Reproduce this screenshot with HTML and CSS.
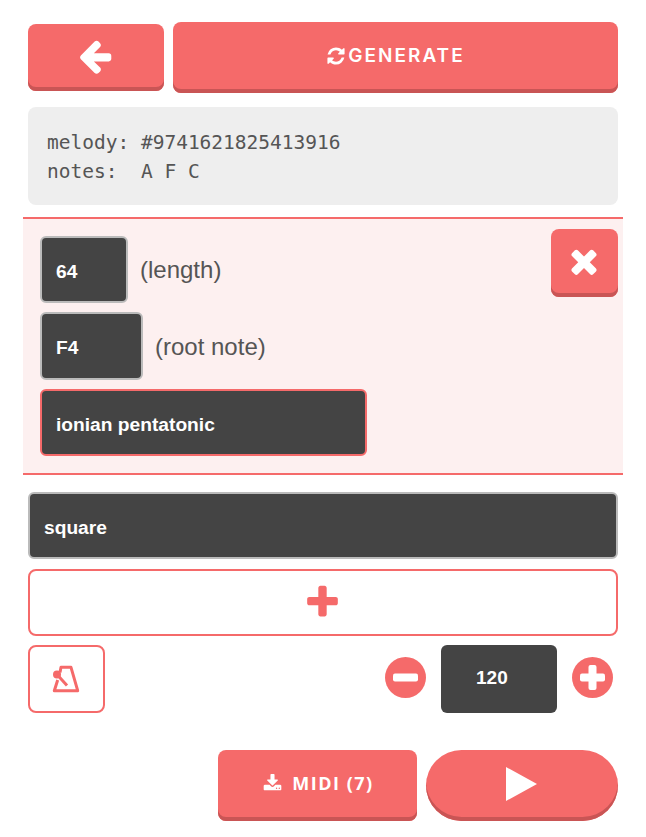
FILE: index.html
```html
<!DOCTYPE html>
<html lang="en">
<head>
    <meta charset="UTF-8">
    <meta name="viewport" content="width=device-width, initial-scale=1.0">
    <title>Melody Generator</title>
    <link rel="stylesheet" href="styles.css">
</head>
<body>
    <div class="container">
        <div class="top-row">
            <button type="button" class="btn btn-back">
                <svg class="icon-back" viewBox="0 0 1792 1792"><path d="M1664 896v128q0 53-32.5 89.5t-84.5 36.5h-704l293 294q38 36 38 90t-38 90l-75 76q-38 38-90 38-53 0-91-38l-651-652q-37-37-37-90 0-52 37-91l651-650q39-38 91-38 52 0 90 38l75 74q38 38 38 91t-38 91l-293 293h704q52 0 84.5 36.5t32.5 89.5z"/></svg>
            </button>
            <button type="button" class="btn btn-generate">
                <svg class="icon-refresh" viewBox="0 0 1792 1792"><path d="M1639 1056q0 5-1 7-64 268-268 434.5t-478 166.5q-146 0-282.5-55t-243.5-157l-129 129q-19 19-45 19t-45-19-19-45v-448q0-26 19-45t45-19h448q26 0 45 19t19 45-19 45l-137 137q71 66 161 102t187 36q134 0 250-65t186-179q11-17 53-117 8-23 30-23h192q13 0 22.5 9.5t9.5 22.5zm25-800v448q0 26-19 45t-45 19h-448q-26 0-45-19t-19-45 19-45l138-138q-148-137-349-137-134 0-250 65t-186 179q-11 17-53 117-8 23-30 23h-199q-13 0-22.5-9.5t-9.5-22.5v-7q65-268 270-434.5t480-166.5q146 0 284 55.5t245 156.5l130-129q19-19 45-19t45 19 19 45z"/></svg>
                GENERATE
            </button>
        </div>

        <pre class="seed">melody: #9741621825413916
notes:  A F C</pre>

        <div class="track">
            <button type="button" class="btn btn-close">
                <svg class="icon-close" viewBox="0 0 1792 1792"><path d="M1490 1322q0 40-28 68l-136 136q-28 28-68 28t-68-28l-294-294-294 294q-28 28-68 28t-68-28l-136-136q-28-28-28-68t28-68l294-294-294-294q-28-28-28-68t28-68l136-136q28-28 68-28t68 28l294 294 294-294q28-28 68-28t68 28l136 136q28 28 28 68t-28 68l-294 294 294 294q28 28 28 68z"/></svg>
            </button>
            <div class="field-row">
                <div class="field field-length">64</div>
                <span class="field-label">(length)</span>
            </div>
            <div class="field-row">
                <div class="field field-root">F4</div>
                <span class="field-label field-label-root">(root note)</span>
            </div>
            <div class="field field-scale">ionian pentatonic</div>
        </div>

        <div class="field field-wave">square</div>

        <button type="button" class="btn-add">
            <svg class="icon-add" viewBox="0 0 1792 1792"><path d="M1600 736v192q0 40-28 68t-68 28h-416v416q0 40-28 68t-68 28h-192q-40 0-68-28t-28-68v-416h-416q-40 0-68-28t-28-68v-192q0-40 28-68t68-28h416v-416q0-40 28-68t68-28h192q40 0 68 28t28 68v416h416q40 0 68 28t28 68z"/></svg>
        </button>

        <div class="tempo-row">
            <button type="button" class="btn-metronome">
                <svg class="icon-metronome" viewBox="0 0 26 26">
                    <path d="M7 6.5 L8 1.3 H18 L24.7 24.7 H1.3 L4.7 14" />
                    <line x1="4" y1="8.5" x2="14" y2="19.5" />
                    <circle cx="4" cy="8.5" r="4" />
                </svg>
            </button>
            <div class="tempo">
                <svg class="icon-round" viewBox="0 0 41 41">
                    <circle cx="20.5" cy="20.5" r="20.5" />
                    <rect x="8" y="16.5" width="25" height="8" rx="2" />
                </svg>
                <div class="tempo-value">120</div>
                <svg class="icon-round" viewBox="0 0 41 41">
                    <circle cx="20.5" cy="20.5" r="20.5" />
                    <rect x="8" y="16.5" width="25" height="8" rx="2" />
                    <rect x="16.5" y="8" width="8" height="25" rx="2" />
                </svg>
            </div>
        </div>

        <div class="bottom-row">
            <button type="button" class="btn btn-midi">
                <svg class="icon-download" viewBox="0 0 1792 1792"><path d="M1344 1344q0-26-19-45t-45-19-45 19-19 45 19 45 45 19 45-19 19-45zm256 0q0-26-19-45t-45-19-45 19-19 45 19 45 45 19 45-19 19-45zm128-224v320q0 40-28 68t-68 28h-1472q-40 0-68-28t-28-68v-320q0-40 28-68t68-28h465l135 136q58 56 136 56t136-56l136-136h464q40 0 68 28t28 68zm-325-569q17 41-14 70l-448 448q-18 19-45 19t-45-19l-448-448q-31-29-14-70 17-39 59-39h256v-448q0-26 19-45t45-19h256q26 0 45 19t19 45v448h256q42 0 59 39z"/></svg>
                <span class="midi-label">MIDI (7)</span>
            </button>
            <button type="button" class="btn btn-play">
                <svg class="icon-play" viewBox="0 0 31 34"><polygon points="0,0 31,17 0,34"/></svg>
            </button>
        </div>
    </div>
</body>
</html>
```

FILE: styles.css
```css
body {
    font-family: "Liberation Sans", Arial, sans-serif;
    background-color: #fff;
    color: #555;
    margin: 0;
}
button {
    padding: 0;
    cursor: pointer;
}
svg {
    display: block;
}
.container {
    padding: 22px 28px 0;
}
.btn {
    display: flex;
    align-items: center;
    justify-content: center;
    padding-bottom: 4px;
    border: none;
    border-radius: 8px;
    background-color: #f56a6a;
    box-shadow: inset 0 -4px 0 #c95555;
    color: #fff;
    fill: #fff;
    font-family: "Open Sans", sans-serif;
    font-weight: 700;
    font-size: 18px;
    letter-spacing: 1.5px;
}
.top-row {
    display: flex;
    align-items: center;
    gap: 9px;
}
.btn-back {
    width: 136px;
    height: 67px;
}
.icon-back {
    width: 38px;
    height: 38px;
    margin-right: 2px;
}
.btn-generate {
    flex: 1;
    height: 71px;
    gap: 2px;
    font-family: Inter, sans-serif;
    font-weight: 600;
    font-size: 19px;
    letter-spacing: 2px;
}
.icon-refresh {
    width: 20px;
    height: 20px;
}
.seed {
    margin: 14px 0 0;
    padding: 21px 19px 19px;
    height: 58px;
    background-color: #eee;
    border-radius: 8px;
    font-family: "DejaVu Sans Mono", monospace;
    font-size: 19.5px;
    line-height: 29px;
    color: #555;
}
.track {
    position: relative;
    margin: 12px -5px 0;
    padding: 17px;
    border-top: 2px solid #f56a6a;
    border-bottom: 2px solid #f56a6a;
    background-color: #fdf0f0;
}
.btn-close {
    position: absolute;
    top: 10px;
    right: 5px;
    width: 67px;
    height: 68px;
}
.icon-close {
    width: 38px;
    height: 38px;
    margin-right: 2px;
}
.field-row {
    display: flex;
    align-items: center;
    margin-bottom: 9px;
}
.field {
    display: flex;
    align-items: center;
    box-sizing: border-box;
    height: 67px;
    padding: 4px 14px 0;
    background-color: #444;
    border: 2px solid #bbb;
    border-radius: 6px;
    color: #fff;
    font-weight: bold;
    font-size: 19.2px;
}
.field-length {
    width: 88px;
}
.field-root {
    width: 103px;
    height: 68px;
}
.field-scale {
    width: 327px;
    border-color: #f56a6a;
}
.field-label {
    margin-left: 12px;
    font-size: 24px;
}
.field-label-root {
    padding-top: 2px;
}
.field-wave {
    margin-top: 17px;
}
.btn-add {
    display: flex;
    align-items: center;
    justify-content: center;
    box-sizing: border-box;
    width: 100%;
    height: 67px;
    margin-top: 10px;
    background: #fff;
    border: 2px solid #f56a6a;
    border-radius: 8px;
    fill: #f56a6a;
}
.icon-add {
    width: 39px;
    height: 39px;
    margin-right: 1px;
}
.tempo-row {
    display: flex;
    justify-content: space-between;
    align-items: center;
    margin-top: 9px;
}
.btn-metronome {
    display: flex;
    align-items: center;
    justify-content: center;
    box-sizing: border-box;
    width: 77px;
    height: 68px;
    background: #fff;
    border: 2px solid #f56a6a;
    border-radius: 8px;
}
.icon-metronome {
    width: 26px;
    height: 26px;
    margin-right: 2px;
    overflow: visible;
    fill: none;
    stroke: #f56a6a;
    stroke-width: 3;
    stroke-linejoin: round;
}
.icon-metronome circle {
    fill: #f56a6a;
    stroke: none;
}
.tempo {
    display: flex;
    align-items: center;
    gap: 15px;
    padding-right: 5px;
}
.icon-round {
    width: 41px;
    height: 41px;
    margin-bottom: 3px;
    fill: #f56a6a;
}
.icon-round rect {
    fill: #fff;
}
.tempo-value {
    box-sizing: border-box;
    width: 116px;
    height: 68px;
    padding: 0 0 0 35px;
    background-color: #444;
    border-radius: 6px;
    color: #fff;
    font-weight: bold;
    font-size: 19px;
    line-height: 66px;
}
.bottom-row {
    display: flex;
    justify-content: flex-end;
    gap: 9px;
    margin-top: 37px;
}
.btn-midi {
    width: 199px;
    height: 71px;
    padding-left: 2px;
    gap: 10px;
}
.midi-label {
    padding-bottom: 2px;
}
.icon-download {
    width: 19px;
    height: 19px;
}
.btn-play {
    width: 192px;
    height: 71px;
    border-radius: 36px;
}
.icon-play {
    width: 31px;
    height: 34px;
    margin-right: 2px;
}
```
